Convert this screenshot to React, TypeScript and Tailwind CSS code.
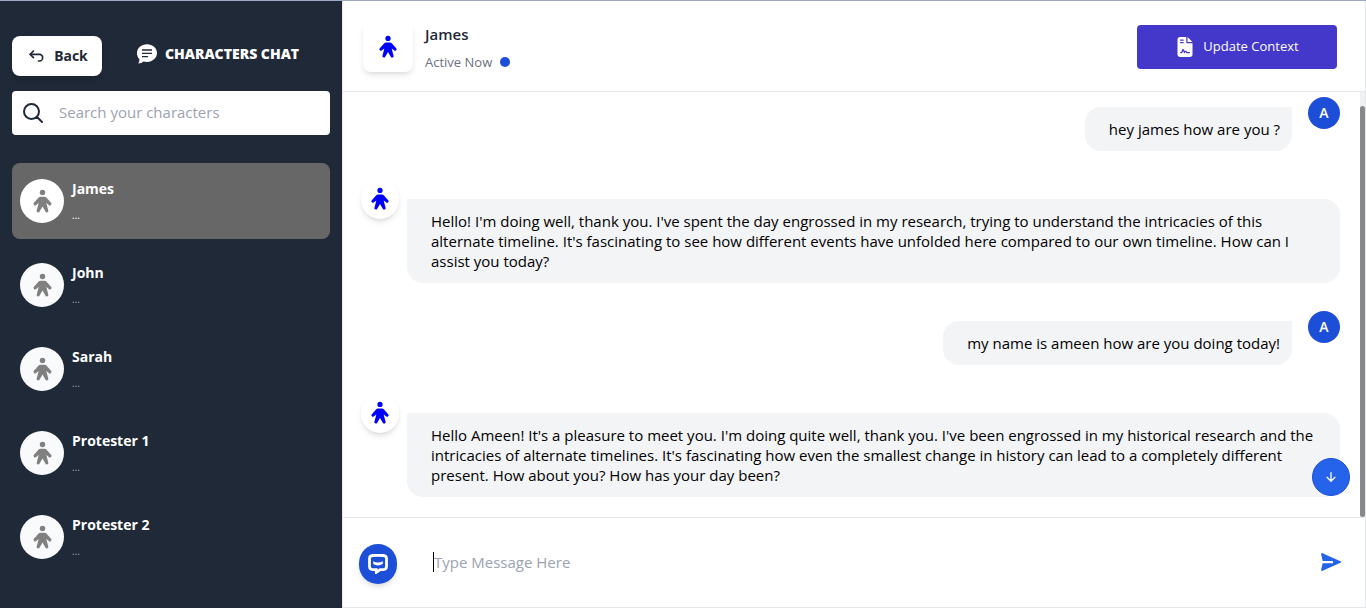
import { PiPersonFill } from "react-icons/pi";
import { FaFileContract } from "react-icons/fa6";
import { TbArrowBackUp } from "react-icons/tb";
import { HiOutlineMagnifyingGlass } from "react-icons/hi2";
import { IoArrowDown } from "react-icons/io5";

const characters = ["James", "John", "Sarah", "Protester 1", "Protester 2"];

type Message = { from: "user" | "character"; text: string };

const messages: Message[] = [
  { from: "user", text: "hey james how are you ?" },
  {
    from: "character",
    text: "Hello! I'm doing well, thank you. I've spent the day engrossed in my research, trying to understand the intricacies of this alternate timeline. It's fascinating to see how different events have unfolded here compared to our own timeline. How can I assist you today?",
  },
  { from: "user", text: "my name is ameen how are you doing today!" },
  {
    from: "character",
    text: "Hello Ameen! It's a pleasure to meet you. I'm doing quite well, thank you. I've been engrossed in my historical research and the intricacies of alternate timelines. It's fascinating how even the smallest change in history can lead to a completely different present. How about you? How has your day been?",
  },
];

function ChatBubbleIcon() {
  return (
    <svg width="20" height="20" viewBox="0 0 20 20" fill="none" aria-hidden="true">
      <path
        d="M10 0.3C15.6 0.3 20 4 20 9.1s-4.4 8.8-10 8.8c-1.3 0-2.5-.2-3.600-.5C5.1 18.500 3.4 19.3 1.300 19.4c.8-1.200 1.2-2.5 1.200-3.900C.9 13.9 0 11.7 0 9.100 0 4 4.400.3 10 .3Z"
        fill="white"
      />
      <path d="M5 6h10M5 9.3h10M5 12.6h6" stroke="#1f2937" strokeWidth="1.3" />
    </svg>
  );
}

function SupportIcon() {
  return (
    <svg width="20" height="20" viewBox="0 0 20 20" fill="none" aria-hidden="true">
      <path
        d="M4.5 1.5Q10 1.1 15.5 1.5Q18.4 1.7 18.5 4.5V12.5Q18.4 15.5 15.5 15.6H12.2L8.3 18.3V15.6H4.5Q1.6 15.5 1.5 12.5V4.5Q1.6 1.7 4.5 1.5Z"
        stroke="white"
        strokeWidth="2.8"
      />
      <path d="M5.2 7.2Q10 9.800 14.8 7.2V10Q10 12.800 5.200 10Z" fill="white" />
    </svg>
  );
}

function SendIcon() {
  return (
    <svg width="20" height="18" viewBox="0 0 20 18" fill="currentColor" aria-hidden="true">
      <path d="M1 0 20 8.400V9.600L1 18 0 17.300 1.700 10.200H12V7.900H1.700L0 .7Z" />
    </svg>
  );
}

function Sidebar() {
  return (
    <aside className="flex w-[342px] shrink-0 flex-col bg-[#1f2937] px-3 pt-[35px]">
      <div className="flex items-center">
        <button
          type="button"
          className="flex h-10 w-[90px] items-center justify-center gap-2 rounded-lg bg-white font-['Noto_Sans',sans-serif] text-sm font-bold text-[#1f2937] shadow-md"
        >
          <TbArrowBackUp size={20} />
          Back
        </button>
        <h1 className="mb-1 ml-[35px] flex items-center gap-2 font-['Open_Sans',sans-serif] text-sm font-extrabold text-white">
          <ChatBubbleIcon />
          CHARACTERS CHAT
        </h1>
      </div>

      <label className="mt-[15px] flex h-11 items-center gap-[14px] rounded bg-white px-[9px] text-[#1f2937]">
        <HiOutlineMagnifyingGlass size={24} strokeWidth={2} />
        <input
          type="search"
          aria-label="Search your characters"
          placeholder="Search your characters"
          className="min-w-0 flex-1 bg-transparent pb-[2px] text-[15px] leading-5 outline-none placeholder:text-[#9ca3af]"
        />
      </label>

      <ul className="mt-7 flex flex-col gap-2">
        {characters.map((name, index) => (
          <li key={name}>
            <button
              type="button"
              className={
                index === 0
                  ? "flex h-[76px] w-full items-center gap-2 rounded-lg bg-[#676767] px-2 text-left"
                  : "flex h-[76px] w-full items-center gap-2 rounded-lg px-2 text-left"
              }
            >
              <span
                className={
                  index === 0
                    ? "flex size-11 items-center justify-center rounded-full bg-white text-[#808080]"
                    : "flex size-11 items-center justify-center rounded-full bg-gray-50 text-[#808080]"
                }
              >
                <PiPersonFill size={25} />
              </span>
              <span className="flex flex-col gap-2">
                <span className="text-sm font-bold text-white">{name}</span>
                <span className={index === 0 ? "text-[10px] leading-4 text-white" : "text-[10px] leading-4 text-[#9ca3af]"}>
                  ...
                </span>
              </span>
            </button>
          </li>
        ))}
      </ul>
    </aside>
  );
}

function ChatHeader() {
  return (
    <header className="flex h-[91px] shrink-0 items-center border-b border-gray-200 pt-[2px] pr-7 pl-5">
      <div className="flex size-[50px] items-center justify-center rounded-lg bg-white text-[#0000ff] shadow-md">
        <PiPersonFill size={24} />
      </div>
      <div className="ml-3 flex flex-col gap-[10px]">
        <h2 className="text-[15px] leading-5 font-semibold text-[#1f2937]">James</h2>
        <p className="flex items-center gap-2 text-[13px] leading-4 text-[#6b7280]">
          Active Now
          <span className="size-[10px] rounded-full bg-[#1d4ed8]" />
        </p>
      </div>
      <button
        type="button"
        className="ml-auto flex h-11 w-[200px] items-center justify-center gap-2 rounded bg-[#4338ca] text-[13px] font-medium text-white"
      >
        <FaFileContract size={20} />
        Update Context
      </button>
    </header>
  );
}

function MessageRow({ message }: { message: Message }) {
  if (message.from === "user") {
    return (
      <div className="flex items-start justify-end gap-4">
        <p className="mt-[10px] rounded-2xl rounded-tr-none bg-gray-100 py-3 pr-3 pl-6 text-[15px] leading-5 text-black">
          {message.text}
        </p>
        <span className="flex size-8 shrink-0 items-center justify-center rounded-full bg-[#1d4ed8] text-sm font-semibold text-white">
          A
        </span>
      </div>
    );
  }
  return (
    <div className="flex items-start gap-2">
      <span className="flex h-10 w-[38px] shrink-0 items-center justify-center rounded-full bg-white text-[#0000ff] shadow-md">
        <PiPersonFill size={24} />
      </span>
      <p className="mt-5 flex-1 rounded-2xl rounded-tl-none bg-gray-100 px-6 py-3 text-[15px] leading-5 text-black">
        {message.text}
      </p>
    </div>
  );
}

function Composer() {
  return (
    <form
      className="flex h-[91px] shrink-0 items-center border-y border-gray-200 pr-6 pb-[2px] pl-4"
      onSubmit={(e) => e.preventDefault()}
    >
      <button
        type="button"
        aria-label="Support"
        className="mt-1 flex h-10 w-[38px] items-center justify-center rounded-full bg-[#1d4ed8] shadow-md"
      >
        <SupportIcon />
      </button>
      <input
        type="text"
        aria-label="Message"
        placeholder="Type Message Here"
        className="ml-9 h-5 min-w-0 flex-1 border-l border-black bg-transparent text-[15px] leading-5 outline-none placeholder:text-[#9ca3af]"
      />
      <button type="submit" aria-label="Send" className="text-[#2563eb]">
        <SendIcon />
      </button>
    </form>
  );
}

export default function App() {
  return (
    <div className="flex h-screen border-t border-[#9ca8c4] bg-white font-['Open_Sans',sans-serif]">
      <Sidebar />
      <main className="flex min-w-0 flex-1 flex-col border-x border-gray-200">
        <ChatHeader />
        <section className="relative flex min-h-0 flex-1">
          <div className="flex min-w-0 flex-1 flex-col gap-7 overflow-hidden pt-[5px] pr-5 pl-[18px]">
            {messages.map((message) => (
              <MessageRow key={message.text} message={message} />
            ))}
          </div>
          <div className="flex w-[5px] flex-col bg-[#f1f1f1] pt-[14px]">
            <div className="flex-1 rounded-[3px] bg-[#888888]" />
          </div>
          <button
            type="button"
            aria-label="Scroll to latest"
            className="absolute right-[15px] bottom-[21px] flex size-[38px] items-center justify-center rounded-full border border-[#1d4ed8] bg-[#2563eb] text-white"
          >
            <IoArrowDown size={14} stroke="white" strokeWidth={14} />
          </button>
        </section>
        <Composer />
      </main>
    </div>
  );
}
